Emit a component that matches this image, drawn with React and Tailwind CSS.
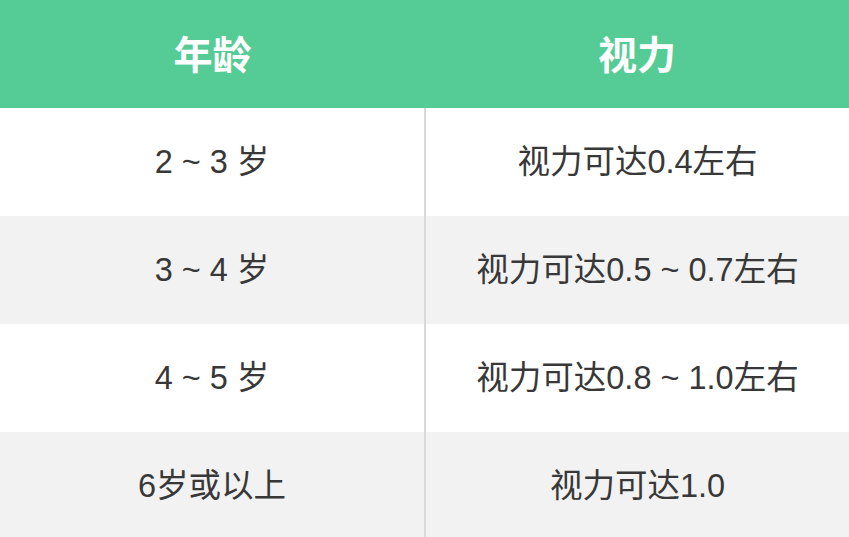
import React from 'react';

const rows = [
  { age: '2 ~ 3 岁', vision: '视力可达0.4左右' },
  { age: '3 ~ 4 岁', vision: '视力可达0.5 ~ 0.7左右' },
  { age: '4 ~ 5 岁', vision: '视力可达0.8 ~ 1.0左右' },
  { age: '6岁或以上', vision: '视力可达1.0' },
];

const App = () => {
  return (
    <div
      className="w-[849px] h-[537px] overflow-hidden bg-white"
      style={{ fontFamily: '"Liberation Sans", "Noto Sans CJK SC", sans-serif' }}
    >
      <div className="grid grid-cols-[425px_424px] h-[108px] bg-[#55cb95] text-white text-[39px] font-bold">
        <div className="flex items-center justify-center pt-[4px]">年龄</div>
        <div className="flex items-center justify-center pt-[4px]">视力</div>
      </div>
      {rows.map((r, i) => (
        <div
          key={i}
          className={`grid grid-cols-[424px_2px_423px] h-[108px] text-[32.5px] text-[#383838] ${
            i % 2 === 0 ? 'bg-white' : 'bg-[#f2f2f2]'
          }`}
        >
          <div className="flex items-center justify-center">{r.age}</div>
          <div className="bg-[#d9d9d9]" />
          <div className="flex items-center justify-center">{r.vision}</div>
        </div>
      ))}
    </div>
  );
};

export default App;
